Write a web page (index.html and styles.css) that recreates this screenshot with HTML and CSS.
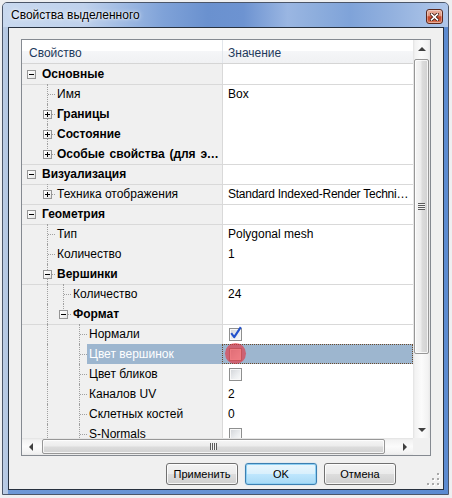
FILE: index.html
```html
<!DOCTYPE html>
<html lang="ru">
<head>
<meta charset="utf-8">
<title>Свойства выделенного</title>
<link rel="stylesheet" href="styles.css">
</head>
<body>
<div class="window">
  <div class="titlebar">
    <span class="title">Свойства выделенного</span>
    <span class="close">
      <svg width="9" height="8" viewBox="0 0 9 8">
        <path d="M1.5 1.2 L7.5 6.8 M7.5 1.2 L1.5 6.8" stroke="#3a160d" stroke-width="3.2" stroke-linecap="square"/>
        <path d="M1.5 1.2 L7.5 6.8 M7.5 1.2 L1.5 6.8" stroke="#ffffff" stroke-width="1.6" stroke-linecap="square"/>
      </svg>
    </span>
  </div>
  <div class="client">
    <div class="grid">
      <div class="grid-main">
        <div class="view">
          <div class="header">
            <div class="hname">Свойство</div>
            <div class="hval">Значение</div>
          </div>
          <div class="rows">
            <div class="row">
              <div class="name l0"><span class="box"></span><span class="label b">Основные</span></div>
              <div class="val"></div>
            </div>
            <div class="row lt">
              <div class="name"><span class="conn"></span><span class="label">Имя</span></div>
              <div class="val">Box</div>
            </div>
            <div class="row">
              <div class="name"><span class="conn"><span class="box plus"></span></span><span class="label b">Границы</span></div>
              <div class="val"></div>
            </div>
            <div class="row">
              <div class="name"><span class="conn"><span class="box plus"></span></span><span class="label b">Состояние</span></div>
              <div class="val"></div>
            </div>
            <div class="row">
              <div class="name"><span class="conn last"><span class="box plus"></span></span><span class="label b">Особые свойства (для элементов)</span></div>
              <div class="val"></div>
            </div>
            <div class="row lt">
              <div class="name l0"><span class="box"></span><span class="label b">Визуализация</span></div>
              <div class="val"></div>
            </div>
            <div class="row lt">
              <div class="name"><span class="conn last"><span class="box plus"></span></span><span class="label">Техника отображения</span></div>
              <div class="val narrow">Standard Indexed-Render Technique</div>
            </div>
            <div class="row lt">
              <div class="name l0"><span class="box"></span><span class="label b">Геометрия</span></div>
              <div class="val"></div>
            </div>
            <div class="row lt">
              <div class="name"><span class="conn"></span><span class="label">Тип</span></div>
              <div class="val">Polygonal mesh</div>
            </div>
            <div class="row">
              <div class="name"><span class="conn"></span><span class="label">Количество</span></div>
              <div class="val">1</div>
            </div>
            <div class="row">
              <div class="name"><span class="conn"><span class="box"></span></span><span class="label b">Вершинки</span></div>
              <div class="val"></div>
            </div>
            <div class="row lt">
              <div class="name"><span class="ind line"></span><span class="conn"></span><span class="label">Количество</span></div>
              <div class="val">24</div>
            </div>
            <div class="row">
              <div class="name"><span class="ind line"></span><span class="conn last"><span class="box"></span></span><span class="label b">Формат</span></div>
              <div class="val"></div>
            </div>
            <div class="row lt">
              <div class="name"><span class="ind line"></span><span class="ind"></span><span class="conn"></span><span class="label">Нормали</span></div>
              <div class="val cb">
                <span class="chk">
                  <svg class="tick" width="14" height="14" viewBox="0 0 14 14"><path d="M2.2 6.2 L5.2 10.2 L11.8 0.2" fill="none" stroke="#2352cc" stroke-width="2.1" stroke-linejoin="round"/></svg>
                </span>
              </div>
            </div>
            <div class="row sel">
              <div class="name"><span class="ind line"></span><span class="ind"></span><span class="conn"></span><span class="label">Цвет вершинок</span></div>
              <div class="val cb"><span class="chk"></span><span class="click"></span></div>
            </div>
            <div class="row">
              <div class="name"><span class="ind line"></span><span class="ind"></span><span class="conn"></span><span class="label">Цвет бликов</span></div>
              <div class="val cb"><span class="chk"></span></div>
            </div>
            <div class="row">
              <div class="name"><span class="ind line"></span><span class="ind"></span><span class="conn"></span><span class="label">Каналов UV</span></div>
              <div class="val">2</div>
            </div>
            <div class="row">
              <div class="name"><span class="ind line"></span><span class="ind"></span><span class="conn"></span><span class="label">Склетных костей</span></div>
              <div class="val">0</div>
            </div>
            <div class="row">
              <div class="name"><span class="ind line"></span><span class="ind"></span><span class="conn"></span><span class="label">S-Normals</span></div>
              <div class="val cb"><span class="chk"></span></div>
            </div>
          </div>
        </div>
        <div class="vscroll">
          <div class="sbtn"><span class="arr up"></span></div>
          <div class="vtrack"><div class="vthumb"><span class="vgrip"></span></div></div>
          <div class="sbtn"><span class="arr down"></span></div>
        </div>
      </div>
      <div class="hbar">
        <div class="hscroll">
          <div class="sbtn"><span class="arr left"></span></div>
          <div class="htrack"><div class="hthumb"><span class="hgrip"></span></div></div>
          <div class="sbtn"><span class="arr right"></span></div>
        </div>
        <div class="corner"></div>
      </div>
    </div>
    <div class="buttons">
      <button class="btn">Применить</button>
      <button class="btn default">OK</button>
      <button class="btn">Отмена</button>
    </div>
    <svg class="grip" width="13" height="13" viewBox="0 0 13 13">
      <g fill="#ffffff">
        <rect x="11" y="1" width="2" height="2"/>
        <rect x="6" y="6" width="2" height="2"/><rect x="11" y="6" width="2" height="2"/>
        <rect x="1" y="11" width="2" height="2"/><rect x="6" y="11" width="2" height="2"/><rect x="11" y="11" width="2" height="2"/>
      </g>
      <g fill="#a9a9a9">
        <rect x="10" y="0" width="2" height="2"/>
        <rect x="5" y="5" width="2" height="2"/><rect x="10" y="5" width="2" height="2"/>
        <rect x="0" y="10" width="2" height="2"/><rect x="5" y="10" width="2" height="2"/><rect x="10" y="10" width="2" height="2"/>
      </g>
    </svg>
  </div>
</div>
</body>
</html>
```
FILE: styles.css
```css
* { box-sizing: border-box; }

html, body {
  margin: 0;
  padding: 0;
}

body {
  width: 452px;
  height: 498px;
  overflow: hidden;
  background: #eeeff1;
  font-family: "Liberation Sans", Arial, sans-serif;
  font-size: 12px;
  color: #000;
}

.window {
  margin: 2px 0 0 2px;
  width: 447px;
  height: 493px;
  border: 1px solid #4b5669;
  border-radius: 5px 5px 0 0;
  display: flex;
  flex-direction: column;
  background: linear-gradient(90deg, #bccde5 0, #b2c6e2 5px, #6d97d6 5px, #5c8bd1 100%);
  overflow: hidden;
}

.titlebar {
  flex: none;
  height: 24px;
  display: flex;
  align-items: flex-start;
  padding-left: 8px;
  background: linear-gradient(90deg,
    #c9d9ef 0%, #bfd1ec 18%, #9cb8e2 28%, #7fa2d8 36%, #6a91cf 46%,
    #6d93d1 54%, #9ab6e2 64%, #8eaedd 70%, #7fa3d9 78%, #94b2df 88%, #b0c7ea 100%);
}

.title {
  line-height: 24px;
  font-size: 12px;
  color: #000;
  text-shadow: 0 0 5px rgba(255, 255, 255, 0.9), 0 0 2px rgba(255, 255, 255, 0.8);
}

.close {
  margin: 6px 5px 0 auto;
  width: 17px;
  height: 15px;
  border: 1px solid #5b281d;
  border-radius: 3px;
  display: flex;
  align-items: center;
  justify-content: center;
  background: linear-gradient(#eab4a4 0, #dd8f76 45%, #c4452a 52%, #c84f30 75%, #de8b6d 100%);
  box-shadow: inset 0 0 0 1px rgba(255, 255, 255, 0.35);
}

.client {
  position: relative;
  flex: none;
  height: 463px;
  margin: 0 4px 0 5px;
  border: 1px solid #27313f;
  background: #f0f0f0;
  padding: 11px 0 0 12px;
}

.grid {
  width: 410px;
  height: 417px;
  border: 1px solid #858a91;
  display: flex;
  flex-direction: column;
  background: #fff;
}

.grid-main {
  height: 398px;
  display: flex;
}

.view {
  width: 391px;
  display: flex;
  flex-direction: column;
}

.header {
  flex: none;
  height: 24px;
  display: flex;
  border-bottom: 1px solid #d5d5d5;
  background: linear-gradient(#ffffff 0, #ffffff 48%, #f5f6f8 48%, #f0f1f3 100%);
  color: #1e395b;
}

.hname {
  width: 201px;
  border-right: 1px solid #e2e6eb;
  padding: 3px 0 0 7px;
  line-height: 20px;
}

.hval {
  flex: 1;
  padding: 3px 0 0 5px;
  line-height: 20px;
}

.rows {
  flex: 1;
  overflow: hidden;
}

.row {
  height: 20px;
  display: flex;
  background: linear-gradient(90deg, #f0f0f0 0, #f0f0f0 200px, #ffffff 200px);
}

.row.lt {
  box-shadow: inset 0 1px 0 #d9d9d9;
}

.name {
  flex: none;
  width: 201px;
  border-right: 1px solid #d9d9d9;
  padding-left: 17px;
  display: flex;
  overflow: hidden;
}

.name.l0 {
  padding-left: 5px;
}

.name.l0 > .box {
  margin-top: 6px;
  flex: none;
}

.label {
  flex: 1;
  min-width: 0;
  padding-left: 2px;
  line-height: 20px;
  white-space: nowrap;
  overflow: hidden;
  text-overflow: ellipsis;
}

.l0 .label {
  padding-left: 6px;
}

.b {
  font-weight: bold;
  word-spacing: 1.5px;
}

.conn, .ind {
  flex: none;
  width: 16px;
  height: 20px;
  position: relative;
}

.ind.line::before,
.conn::before {
  content: "";
  position: absolute;
  left: 8px;
  top: 0;
  height: 20px;
  border-left: 1px dotted #a0a0a0;
}

.conn.last::before {
  height: 11px;
}

.conn::after {
  content: "";
  position: absolute;
  left: 9px;
  top: 10px;
  width: 7px;
  border-top: 1px dotted #a0a0a0;
}

.conn .box {
  position: absolute;
  left: 4px;
  top: 6px;
  z-index: 1;
}

.box {
  display: block;
  width: 9px;
  height: 9px;
  border: 1px solid #959595;
  background: linear-gradient(135deg, #ffffff 0, #f4f4f4 50%, #e2e2e2 100%);
  position: relative;
}

.box::before {
  content: "";
  position: absolute;
  left: 1px;
  top: 3px;
  width: 5px;
  height: 1px;
  background: #000;
}

.box.plus::after {
  content: "";
  position: absolute;
  left: 3px;
  top: 1px;
  width: 1px;
  height: 5px;
  background: #000;
}

.val {
  flex: 1;
  min-width: 0;
  padding-left: 5px;
  line-height: 20px;
  white-space: nowrap;
  overflow: hidden;
  text-overflow: ellipsis;
}

.val.narrow {
  letter-spacing: -0.25px;
}

.val.cb {
  display: flex;
  align-items: center;
  overflow: visible;
  position: relative;
}

.chk {
  position: relative;
  width: 13px;
  height: 13px;
  margin-left: 1px;
  border: 1px solid #8e8f8f;
  background: linear-gradient(135deg, #d0d3d7 0, #eceef0 60%, #fafafa 100%);
  box-shadow: inset 0 0 0 1px #f8f8f8;
}

.tick {
  position: absolute;
  left: -1px;
  top: -2px;
  overflow: visible;
}

.row.sel .label {
  background: #9db6cf;
  color: #fff;
}

.row.sel .val {
  margin-left: -1px;
  background: #9db6cf;
  border: 1px dotted #6b4a2c;
}

.click {
  position: absolute;
  left: 2px;
  top: -2px;
  width: 21px;
  height: 21px;
  border-radius: 50%;
  background: rgba(232, 46, 58, 0.62);
}

.vscroll {
  width: 17px;
  display: flex;
  flex-direction: column;
  background: linear-gradient(90deg, #e2e2e2 0, #f2f2f2 2px, #fbfbfb 50%, #f2f2f2 15px, #e8e8e8 17px);
}

.sbtn {
  flex: none;
  width: 17px;
  height: 17px;
  display: flex;
  align-items: center;
  justify-content: center;
}

.arr {
  width: 0;
  height: 0;
}

.arr.up {
  border-left: 4px solid transparent;
  border-right: 4px solid transparent;
  border-bottom: 4px solid #404040;
}

.arr.down {
  border-left: 4px solid transparent;
  border-right: 4px solid transparent;
  border-top: 4px solid #404040;
}

.arr.left {
  border-top: 4px solid transparent;
  border-bottom: 4px solid transparent;
  border-right: 4px solid #404040;
}

.arr.right {
  border-top: 4px solid transparent;
  border-bottom: 4px solid transparent;
  border-left: 4px solid #404040;
}

.vtrack {
  flex: 1;
  padding: 2px 0 0 1px;
}

.vthumb {
  width: 15px;
  height: 295px;
  border: 1px solid #979797;
  border-radius: 2px;
  background: linear-gradient(90deg, #f6f6f6 0, #ececec 45%, #dcdcdc 55%, #d1d1d1 100%);
  box-shadow: inset 0 0 0 1px rgba(255, 255, 255, 0.75);
  display: flex;
  align-items: center;
  justify-content: center;
}

.vgrip {
  width: 7px;
  height: 7px;
  background: repeating-linear-gradient(#5c5c5c 0, #5c5c5c 1px, #f3f3f3 1px, #f3f3f3 2px);
}

.hbar {
  height: 17px;
  display: flex;
}

.hscroll {
  width: 391px;
  display: flex;
  background: linear-gradient(#e2e2e2 0, #f2f2f2 2px, #fbfbfb 50%, #f2f2f2 15px, #e8e8e8 17px);
}

.htrack {
  flex: 1;
  padding: 1px 0 0 3px;
}

.hthumb {
  width: 343px;
  height: 15px;
  border: 1px solid #979797;
  border-radius: 2px;
  background: linear-gradient(#f6f6f6 0, #ececec 45%, #dcdcdc 55%, #d1d1d1 100%);
  box-shadow: inset 0 0 0 1px rgba(255, 255, 255, 0.75);
  display: flex;
  align-items: center;
  justify-content: center;
}

.hgrip {
  width: 7px;
  height: 7px;
  background: repeating-linear-gradient(90deg, #5c5c5c 0, #5c5c5c 1px, #f3f3f3 1px, #f3f3f3 2px);
}

.corner {
  width: 17px;
  background: #f0f0f0;
}

.buttons {
  display: flex;
  gap: 7px;
  margin-top: 7px;
  padding-left: 145px;
}

.btn {
  width: 72px;
  height: 22px;
  padding: 0;
  margin: 0;
  border: 1px solid #707070;
  border-radius: 3px;
  background: linear-gradient(#f3f3f3 0, #ebebeb 48%, #dddddd 52%, #cfcfcf 100%);
  box-shadow: inset 0 0 0 1px rgba(255, 255, 255, 0.8);
  font-family: "Liberation Sans", Arial, sans-serif;
  font-size: 11px;
  color: #000;
}

.btn.default {
  border-color: #3c7fb1;
  background: linear-gradient(#eaf6fd 0, #d9f0fc 48%, #bee6fd 52%, #a7d9f5 100%);
  box-shadow: inset 0 0 0 1px #8fd0f3, 0 0 1px #6fbbe8;
}

.grip {
  position: absolute;
  right: 3px;
  bottom: 3px;
}
```
